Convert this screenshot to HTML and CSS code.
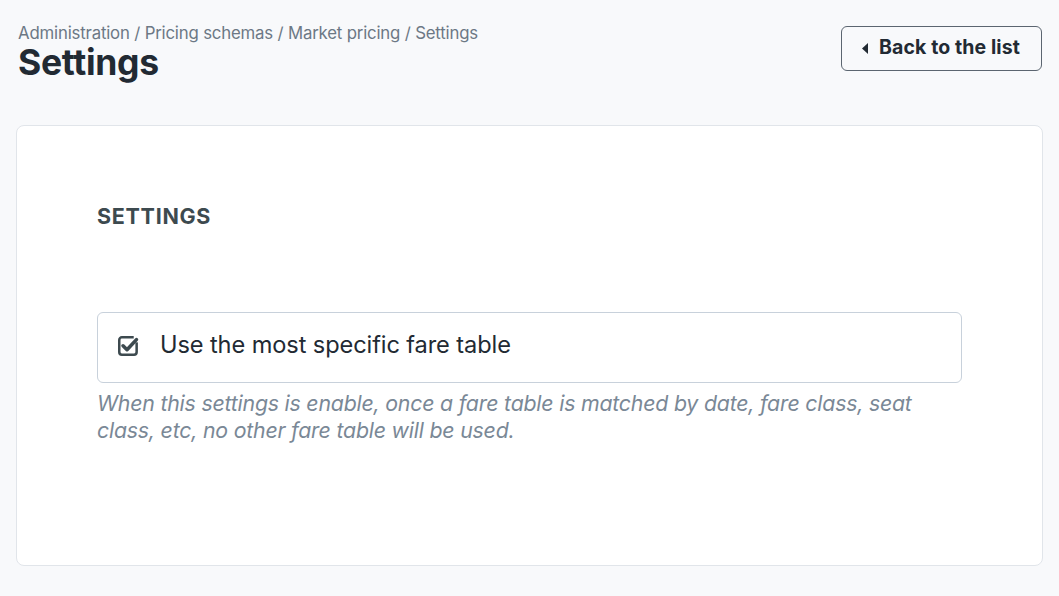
FILE: index.html
```html
<!DOCTYPE html>
<html lang="en">
<head>
<meta charset="utf-8">
<title>Settings</title>
<link rel="stylesheet" href="styles.css">
</head>
<body>
<div class="page">
  <header class="top">
    <div class="titles">
      <div class="crumbs">Administration / Pricing schemas / Market pricing / Settings</div>
      <h1 class="title">Settings</h1>
    </div>
    <button class="back" type="button">
      <svg class="caret" width="6" height="11" viewBox="0 0 6 11"><path d="M6 0 L0 5.5 L6 11 Z" fill="#222a33"/></svg>
      <span>Back to the list</span>
    </button>
  </header>
  <section class="card">
    <h2 class="section-title">SETTINGS</h2>
    <label class="check">
      <svg class="check-icon" width="22" height="21" viewBox="0 0 21 20">
        <rect x="1.2" y="2.2" width="16.6" height="16.6" rx="2.5" fill="none" stroke="#3d4a4f" stroke-width="2.4"/>
        <rect x="15" y="0" width="6" height="7" fill="#fff"/>
        <path d="M4.8 10.3 L8.6 14 L17.6 4.4" fill="none" stroke="#3d4a4f" stroke-width="3.4" stroke-linecap="round" stroke-linejoin="round"/>
      </svg>
      <span class="check-label">Use the most specific fare table</span>
    </label>
    <p class="help">When this settings is enable, once a fare table is matched by date, fare class, seat class, etc, no other fare table will be used.</p>
  </section>
</div>
</body>
</html>
```
FILE: styles.css
```css
* { box-sizing: border-box; }
html, body { margin: 0; padding: 0; }
body {
  background: #f8f9fb;
  font-family: Inter, "Noto Sans", "Liberation Sans", sans-serif;
  color: #222a33;
}
.page {
  padding: 22px 16px 30px 16px;
}
.top {
  display: flex;
  justify-content: space-between;
  align-items: flex-start;
  padding-left: 2px;
}
.crumbs {
  font-size: 16.8px;
  color: #6c7885;
  line-height: 22px;
  letter-spacing: -0.18px;
}
.title {
  margin: 0;
  font-size: 35.5px;
  line-height: 38px;
  font-weight: 700;
  color: #222a33;
  letter-spacing: -0.3px;
}
.back {
  margin-top: 4px;
  margin-right: 1px;
  width: 201px;
  height: 45px;
  display: flex;
  align-items: center;
  gap: 11px;
  padding: 0 0 3px 20px;
  background: #f8f9fb;
  border: 1px solid #5b6570;
  border-radius: 6px;
  font-family: inherit;
  font-size: 19.5px;
  font-weight: 700;
  color: #222a33;
  letter-spacing: 0.1px;
}
.caret { margin-top: 2px; }
.card {
  margin-top: 43px;
  background: #fff;
  border: 1px solid #e1e5ea;
  border-radius: 8px;
  height: 441px;
  padding: 77px 80px 0 80px;
}
.section-title {
  margin: 0;
  font-size: 21.5px;
  font-weight: 700;
  color: #3d4a4f;
  line-height: 26px;
  letter-spacing: 0.7px;
}
.check {
  margin-top: 83px;
  height: 71px;
  display: flex;
  align-items: center;
  gap: 20px;
  padding: 0 0 6px 20px;
  border: 1px solid #c8d1db;
  border-radius: 6px;
}
.check-icon { flex: none; margin-top: 1px; }
.check-label {
  font-size: 23.6px;
  color: #222a33;
  letter-spacing: -0.1px;
}
.help {
  margin: 7px 0 0 0;
  font-size: 21.3px;
  line-height: 27px;
  font-style: italic;
  color: #7a8896;
  letter-spacing: -0.2px;
}
```
